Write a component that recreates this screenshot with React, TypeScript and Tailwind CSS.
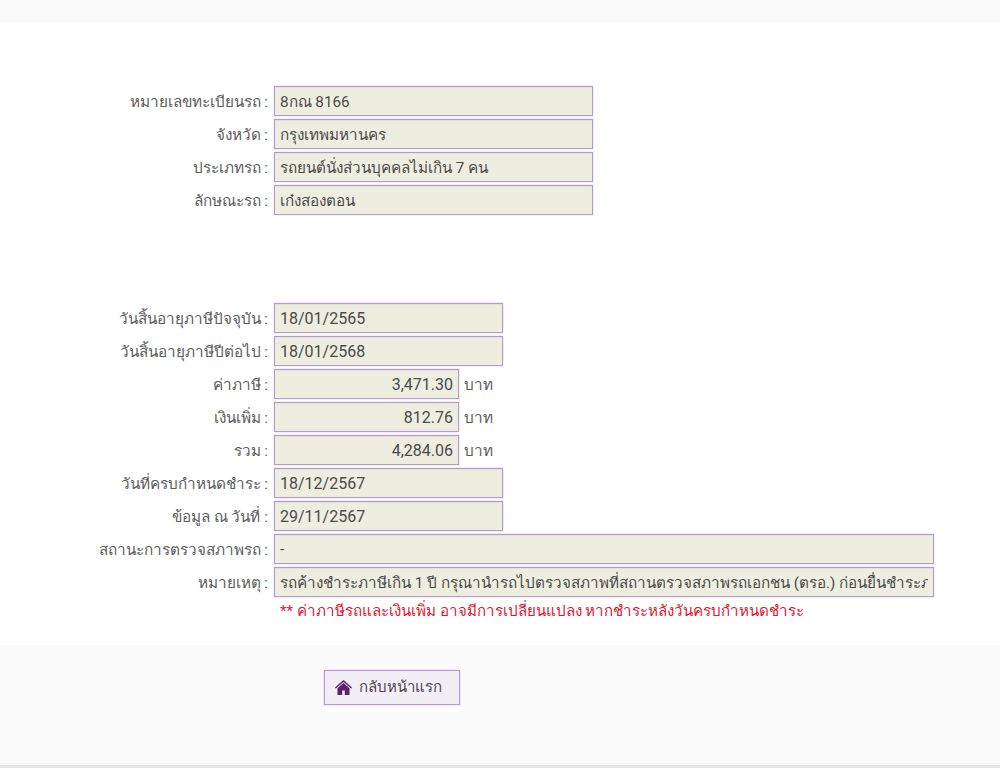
const font = "font-['Roboto','Noto_Sans','DejaVu_Sans',sans-serif]";

function Field({
  label,
  value,
  width = "w-[319px]",
  numeric,
  unit,
}: {
  label: string;
  value: string;
  width?: string;
  numeric?: boolean;
  unit?: string;
}) {
  return (
    <div className="flex h-[33px] items-start">
      <label className="mt-[5px] w-[268px] text-right text-[15.3px] leading-[22px] text-[#5c5c5c]">{label}</label>
      <input
        readOnly
        value={value}
        className={`ml-[6px] h-[30px] ${width} border border-[#b39bd0] bg-[#eeeee0] px-[5px] text-[#4a4a4a] shadow-[0_0_1px_#b39bd0,inset_0_1px_1px_rgba(0,0,0,0.05)] outline-none ${numeric ? "text-[16px]" : "text-[15.25px]"}`}
      />
      {unit && <span className="ml-[5px] mt-[5px] text-[15.3px] leading-[22px] text-[#5c5c5c]">{unit}</span>}
    </div>
  );
}

export default function App() {
  return (
    <div className={`flex h-[768px] flex-col overflow-hidden bg-white ${font}`}>
      <div className="h-[22px] bg-[#fafafa]" />

      <div className="h-[623px] pt-[64px]">
        {/* Vehicle */}
        <Field label="หมายเลขทะเบียนรถ :" value="8กณ 8166" />
        <Field label="จังหวัด :" value="กรุงเทพมหานคร" />
        <Field label="ประเภทรถ :" value="รถยนต์นั่งส่วนบุคคลไม่เกิน 7 คน" />
        <Field label="ลักษณะรถ :" value="เก๋งสองตอน" />

        {/* Tax */}
        <div className="mt-[85px]">
          <Field label="วันสิ้นอายุภาษีปัจจุบัน :" value="18/01/2565" width="w-[229px]" numeric />
          <Field label="วันสิ้นอายุภาษีปีต่อไป :" value="18/01/2568" width="w-[229px]" numeric />
          <Field label="ค่าภาษี :" value="3,471.30" width="w-[185px] text-right" numeric unit="บาท" />
          <Field label="เงินเพิ่ม :" value="812.76" width="w-[185px] text-right" numeric unit="บาท" />
          <Field label="รวม :" value="4,284.06" width="w-[185px] text-right" numeric unit="บาท" />
          <Field label="วันที่ครบกำหนดชำระ :" value="18/12/2567" width="w-[229px]" numeric />
          <Field label="ข้อมูล ณ วันที่ :" value="29/11/2567" width="w-[229px]" numeric />
          <Field label="สถานะการตรวจสภาพรถ :" value="-" width="w-[660px]" />
          <Field
            label="หมายเหตุ :"
            value="รถค้างชำระภาษีเกิน 1 ปี กรุณานำรถไปตรวจสภาพที่สถานตรวจสภาพรถเอกชน (ตรอ.) ก่อนยื่นชำระภาษี"
            width="w-[660px]"
          />
          <p className="ml-[280px] text-[15.15px] leading-[22px] text-[#e0182f]">
            ** ค่าภาษีรถและเงินเพิ่ม อาจมีการเปลี่ยนแปลง หากชำระหลังวันครบกำหนดชำระ
          </p>
        </div>
      </div>

      <div className="h-[120px] bg-[#fbfbfb] pl-[324px] pt-[25px]">
        <button className="flex h-[35px] w-[136px] items-center gap-[7px] border border-[#b39bd0] bg-[#f1eff3] pl-[10px] text-[15px] text-[#4f4358] shadow-[0_0_1px_#b39bd0]">
          <svg width="17" height="15" viewBox="0 0 17 15" fill="#5e1f6e">
            <path d="M8.5 0 L17 7.6 L16.2 8.4 L8.5 1.9 L0.8 8.4 L0 7.6 Z" />
            <path fillRule="evenodd" d="M8.5 3 L14.5 8.2 V15 H2.5 V8.2 Z M7.2 10.5 V15 H9.8 V10.5 Z" />
          </svg>
          กลับหน้าแรก
        </button>
      </div>
      <div className="h-[3px] bg-[#e5e5e5]" />
    </div>
  );
}
